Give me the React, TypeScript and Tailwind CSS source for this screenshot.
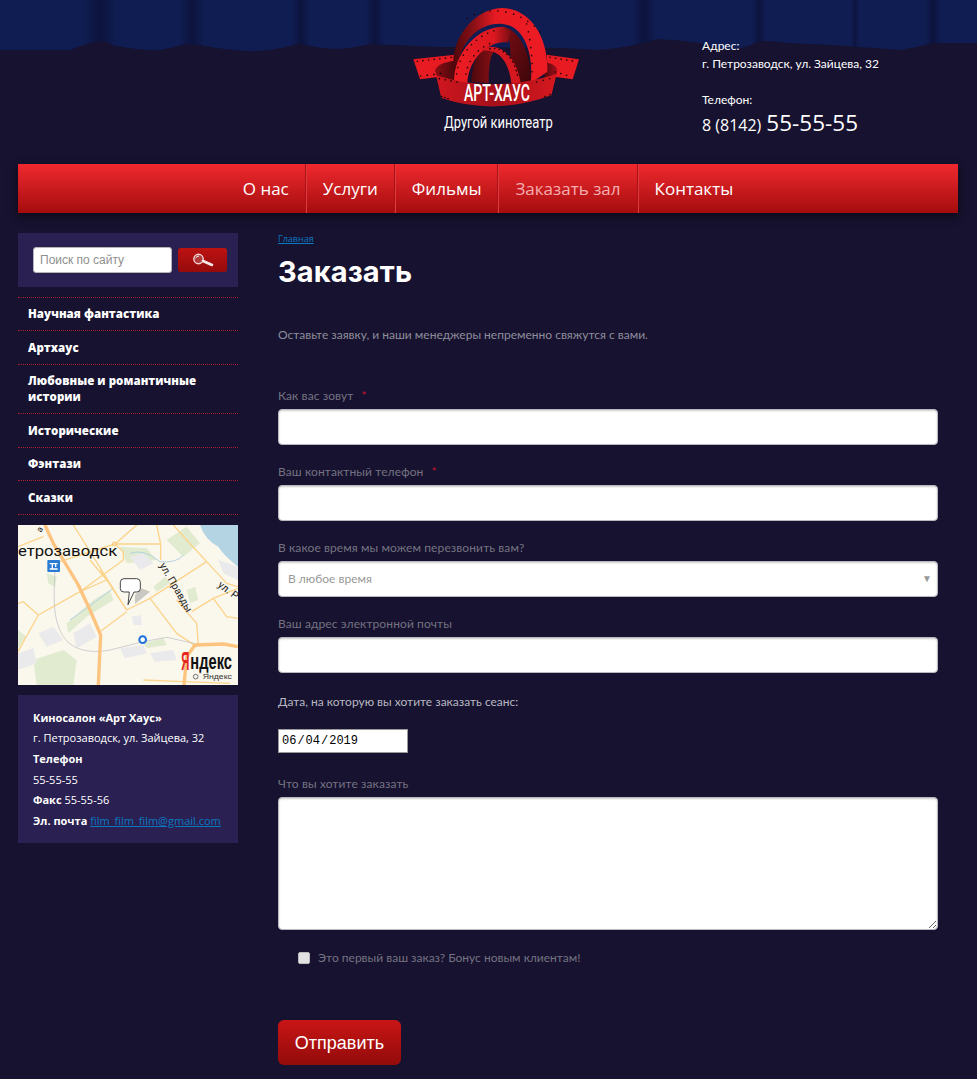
import React from "react";

const open = "font-['Open_Sans','Noto_Sans',sans-serif]";
const labelFont = "font-['Lato','Noto_Sans',sans-serif]";

const curtainEdge =
  "M0 50 L70 50 Q88 43 100 41 Q106 41 112 45 Q140 51 160 50 Q175 47 185 44 L200 45 Q235 52 260 51 Q282 49 300 43 L305 45 Q325 49 340 49 Q358 47 370 44 L440 47 L560 48 L600 50 Q632 47 657 39 Q680 40 700 43 Q718 49 733 50 Q750 46 760 41 Q775 41 787 43 L833 45 L860 47 L900 50 Q918 47 933 43 L977 43 L977 0 L0 0 Z";

const gaps = [
  [84, 32],
  [180, 24],
  [292, 18],
  [366, 18],
  [632, 24],
  [752, 14],
  [851, 8],
  [925, 16],
];

const Curtains = () => (
  <svg className="absolute left-0 top-0" width="977" height="60" viewBox="0 0 977 60">
    <defs>
      <linearGradient id="gap" x1="0" x2="1" y1="0" y2="0">
        <stop offset="0" stopColor="#0a0f35" stopOpacity="0" />
        <stop offset="0.5" stopColor="#0b0f35" stopOpacity="0.75" />
        <stop offset="1" stopColor="#0a0f35" stopOpacity="0" />
      </linearGradient>
      <clipPath id="edge">
        <path d={curtainEdge} />
      </clipPath>
    </defs>
    <path d={curtainEdge} fill="#101d52" />
    <g clipPath="url(#edge)">
      {gaps.map(([x, w]) => (
        <rect key={x} x={x} y="0" width={w} height="60" fill="url(#gap)" />
      ))}
    </g>
  </svg>
);

const Logo = () => (
  <svg width="240" height="150" viewBox="0 0 720 450" className="absolute left-[380px] top-0">
    <defs>
      <linearGradient id="arch" x1="0" x2="1" y1="0" y2="0">
        <stop offset="0" stopColor="#4d080c" />
        <stop offset="0.22" stopColor="#8b1016" />
        <stop offset="0.45" stopColor="#e81a22" />
        <stop offset="1" stopColor="#ed1c24" />
      </linearGradient>
      <linearGradient id="mid" x1="0" x2="1" y1="0" y2="0">
        <stop offset="0" stopColor="#ed1c24" />
        <stop offset="0.7" stopColor="#dd1820" />
        <stop offset="1" stopColor="#7a0d13" />
      </linearGradient>
      <linearGradient id="leg" x1="0" x2="1" y1="0" y2="1">
        <stop offset="0" stopColor="#7a0d13" />
        <stop offset="1" stopColor="#3d060a" />
      </linearGradient>
      <linearGradient id="inLeft" x1="0" x2="1" y1="0" y2="0">
        <stop offset="0" stopColor="#4d080c" />
        <stop offset="1" stopColor="#8b1016" />
      </linearGradient>
      <linearGradient id="band" x1="0" x2="1" y1="0" y2="0">
        <stop offset="0" stopColor="#d0161e" />
        <stop offset="0.5" stopColor="#a5101a" />
        <stop offset="1" stopColor="#d8181f" />
      </linearGradient>
      <linearGradient id="back" x1="0" x2="1" y1="0" y2="0">
        <stop offset="0" stopColor="#8a0e14" />
        <stop offset="1" stopColor="#3d060a" />
      </linearGradient>
      <linearGradient id="backR" x1="0" x2="1" y1="0" y2="0">
        <stop offset="0" stopColor="#4d080c" />
        <stop offset="1" stopColor="#a5101a" />
      </linearGradient>
    </defs>
    <path d="M100 178 L225 164 L225 225 L120 238 Z" fill="#e81a22" />
    <path d="M500 164 L597 178 L578 238 L505 228 Z" fill="#e81a22" />
    <path d="M165 212 Q172 188 225 182 L240 250 L172 232 Z" fill="url(#back)" />
    <path d="M500 188 Q530 192 532 212 L528 228 L490 250 Z" fill="url(#backR)" />
    {/* dark right leg of the middle ribbon */}
    <path d="M370 80 C420 92 455 160 452 250 L395 250 L390 130 Z" fill="url(#leg)" />
    {/* outer ribbon */}
    <path
      d="M220 190 C218 110 285 26 365 24 C445 24 506 105 502 215 L452 250 C462 160 432 78 368 72 C300 66 245 120 232 200 Z"
      fill="url(#arch)"
    />
    {/* left dark leg of the inner ribbon */}
    <path d="M274 245 C276 190 295 155 325 142 L345 150 C330 165 326 200 326 250 Z" fill="url(#inLeft)" />
    {/* middle ribbon */}
    <path d="M222 245 C222 160 290 80 370 80 L392 92 L384 128 C340 118 266 165 262 250 Z" fill="url(#mid)" />
    {/* inner ribbon */}
    <path d="M305 148 C350 122 408 160 422 250 L394 250 C388 195 365 152 318 152 Z" fill="#d5181f" />
    {/* front band */}
    <path d="M168 226 Q340 282 530 222 L514 286 Q345 348 184 294 Z" fill="url(#band)" />
    <g fill="none" stroke="#1a0508" strokeLinecap="round" strokeWidth="5">
      <path d="M112 184 L215 172" strokeDasharray="0 17" />
      <path d="M122 228 L200 218" strokeDasharray="0 20" />
      <path d="M510 172 L585 184" strokeDasharray="0 17" />
      <path d="M525 216 L575 230" strokeDasharray="0 18" />
      <path d="M262 55 C320 18 420 22 488 105" strokeDasharray="0 24" />
      <path d="M440 72 C452 120 458 180 456 225" strokeDasharray="0 24" />
      <path d="M230 222 C236 165 290 100 360 88" strokeDasharray="0 20" />
      <path d="M258 222 C262 190 290 140 340 128" strokeDasharray="0 20" />
      <path d="M330 146 C370 140 405 175 414 235" strokeDasharray="0 14" />
      <path d="M178 236 L240 248" strokeDasharray="0 18" />
      <path d="M185 290 L205 296" strokeDasharray="0 10" />
      <path d="M495 290 L515 282" strokeDasharray="0 16" />
      <path d="M470 246 L525 232" strokeDasharray="0 20" />
    </g>
    <text x="252" y="303" textLength="198" lengthAdjust="spacingAndGlyphs" fill="#fff" fontSize="70" fontWeight="500" fontFamily="Roboto, sans-serif">
      АРТ-ХАУС
    </text>
    <text x="192" y="385" textLength="326" lengthAdjust="spacingAndGlyphs" fill="#fff" fontSize="48" fontFamily="Roboto, sans-serif">
      Другой кинотеатр
    </text>
  </svg>
);

const Road = ({ d, w = 4, c = "#fcd48a" }: { d: string; w?: number; c?: string }) => (
  <path d={d} fill="none" stroke={c} strokeWidth={w} strokeLinejoin="round" />
);

const MapPic = () => (
  <svg width="220" height="160" viewBox="24 15 660 480" className="block">
    <rect x="24" y="15" width="660" height="480" fill="#faf7ed" />
    <path d="M570 15 H684 V140 Q640 105 625 80 Q585 60 570 15 Z" fill="#b4d3e3" />
    <g fill="#e1ebd0">
      <path d="M470 60 L530 20 L570 70 L520 110 Z" />
      <path d="M330 80 L410 85 L440 120 L350 130 Z" />
      <path d="M170 310 L250 240 L300 210 L310 240 L230 290 L175 340 Z" />
      <path d="M430 200 L465 170 L480 190 L440 215 Z" />
      <path d="M70 420 L160 390 L200 420 L190 495 L80 495 Z" />
      <path d="M24 330 L50 350 L24 385 Z" />
      <path d="M530 210 L555 200 L565 240 L540 250 Z" />
      <path d="M400 370 L460 355 L470 375 L410 385 Z" />
      <path d="M110 160 L140 170 L135 200 L115 190 Z" />
    </g>
    <g fill="#eaeaec">
      <path d="M85 340 L130 320 L160 360 L110 380 Z" />
      <path d="M190 340 L240 310 L260 350 L200 385 Z" />
      <path d="M360 110 L400 100 L430 130 L390 150 Z" />
      <path d="M330 385 L400 375 L410 400 L345 415 Z" />
      <path d="M365 290 L392 285 L395 315 L372 315 Z" />
      <path d="M24 400 L70 385 L80 430 L24 450 Z" />
      <path d="M625 120 L684 140 L684 180 L640 160 Z" />
      <path d="M420 400 L490 390 L500 420 L435 425 Z" />
    </g>
    <Road d="M360 100 Q400 85 450 125 Q500 130 520 105" w={3} c="#b4d3e3" />
    <Road d="M180 300 Q250 250 310 205" w={3} c="#b4d3e3" />
    <g>
      <Road d="M24 395 L85 285 L210 215 L340 120 L340 95 L315 72 L450 72" />
      <Road d="M85 285 L40 245 L24 250" />
      <Road d="M190 15 L350 270 L420 235 L590 125 L650 190 L684 200" />
      <Road d="M270 335 L350 275" />
      <Road d="M420 235 L500 340 L560 380" />
      <Road d="M440 15 L452 72 L452 120" />
      <Road d="M380 15 L315 72 L150 125" />
      <Road d="M590 125 L530 60 L490 15" />
      <Road d="M545 275 L610 235 L650 290 L684 295" />
      <Road d="M500 240 L560 310 L565 375" />
      <Road d="M610 235 L684 205" />
      <Road d="M400 480 L520 485 L660 490" />
      <Road d="M24 80 L100 50" />
      <Road d="M270 150 L350 270" />
      <Road d="M240 120 L290 180 L210 215" />
    </g>
    <Road d="M135 150 C130 250 130 300 160 350 C190 395 250 400 300 390 L400 365 L470 352 L560 372" w={2} c="#b9b9c2" />
    <Road d="M105 15 L130 70 L205 195 L240 270 L272 345 L265 495" w={10} c="#fdc47f" />
    <Road d="M684 380 L640 372 L555 375 L530 410 L522 495" w={10} c="#fdc47f" />
    <circle cx="313" cy="72" r="6" fill="#fce0a6" stroke="#f2b968" strokeWidth="2" />
    <rect x="112" y="120" width="38" height="36" rx="3" fill="#2a7bd3" />
    <path d="M119 131 H143 M119 147 H143 M127 131 V145 M137 131 V141" stroke="#fff" strokeWidth="4" />
    <text x="24" y="108" fontSize="43" fill="#111" fontFamily="Roboto, sans-serif" textLength="298" lengthAdjust="spacingAndGlyphs">етрозаводск</text>
    <text x="0" y="0" fontSize="31" fill="#222" fontFamily="Roboto, sans-serif" transform="translate(448 136) rotate(60)">ул. Правды</text>
    <text x="0" y="0" fontSize="31" fill="#222" fontFamily="Roboto, sans-serif" transform="translate(622 198) rotate(38)">ул. Р</text>
    <text x="0" y="0" fontSize="26" fill="#222" fontFamily="Roboto, sans-serif" transform="translate(94 38) rotate(-65)">а</text>
    <path d="M375 252 L420 215 L395 205 L375 225 Z" fill="#9a9a9a" opacity="0.5" />
    <path
      d="M342 176 H380 Q391 176 391 187 V206 Q391 216 380 216 H372 L354 254 L358 216 H342 Q331 216 331 206 V187 Q331 176 342 176 Z"
      fill="#fff"
      stroke="#222"
      strokeWidth="2.5"
    />
    <circle cx="398" cy="359" r="10" fill="#fff" stroke="#1c6fd8" strokeWidth="6" />
    <text x="0" y="0" fontSize="34" fontWeight="700" fill="#e52620" fontFamily="Liberation Sans, sans-serif" transform="translate(514 449) scale(1 2.2)">Я</text>
    <text x="0" y="0" fontSize="44" fontWeight="700" fill="#111" fontFamily="Liberation Sans, sans-serif" transform="translate(541 448) scale(1 1.55)">ндекс</text>
    <rect x="543" y="458" width="126" height="24" fill="#faf7ed" opacity="0.8" />
    <circle cx="557" cy="470" r="7" fill="none" stroke="#333" strokeWidth="2" />
    <text x="578" y="478" fontSize="22" fill="#333" fontFamily="Liberation Sans, sans-serif" textLength="88" lengthAdjust="spacingAndGlyphs">Яндекс</text>
  </svg>
);

const SearchIcon = () => (
  <svg width="22" height="14" viewBox="0 0 22 14" fill="none">
    <circle cx="6.5" cy="6" r="4.7" stroke="#f3d6d6" strokeWidth="1.4" fill="#b23a3a" />
    <path d="M3.5 5 Q5 3 7 3" stroke="#fff" strokeWidth="1" />
    <path d="M11 8 L20 12" stroke="#f5e9e9" strokeWidth="2.6" strokeLinecap="round" />
  </svg>
);

const fieldClass =
  "block w-full h-9 bg-white border border-[#b9b9c0] rounded-[4px] shadow-[inset_0_1px_2px_rgba(0,0,0,0.2)] outline-none";

const Label = ({ text, required }: { text: string; required?: boolean }) => (
  <label className={`block text-xs leading-4 tracking-[0.1px] text-[#757382] ${labelFont}`}>
    {text}
    {required && <span className="ml-2 text-[#c8102e]">*</span>}
  </label>
);

const menu = ["Научная фантастика", "Артхаус", "Любовные и романтичные истории", "Исторические", "Фэнтази", "Сказки"];
const nav = ["О нас", "Услуги", "Фильмы", "Заказать зал", "Контакты"];

export default function App() {
  return (
    <div className="relative h-[1079px] overflow-hidden bg-[#16122f] pl-[18px] pr-[19px]">
      <header className="relative -ml-[18px] -mr-[19px] h-[164px]">
        <Curtains />
        <Logo />
        <div className={`absolute left-[702px] top-[37px] text-xs text-white ${labelFont}`}>
          <p className="leading-[17px]">Адрес:</p>
          <p className="mt-[1px] leading-[17px]">г. Петрозаводск, ул. Зайцева, 32</p>
          <p className="mt-[19px] leading-[17px]">Телефон:</p>
          <p className={`flex items-baseline text-base leading-[30px] ${open}`}>
            8 (8142)<span className="ml-[5px] text-[22.5px]">55-55-55</span>
          </p>
        </div>
      </header>

      <nav className={`flex h-[49px] justify-center bg-gradient-to-b from-[#f0292e] to-[#a50c0d] shadow-[0_3px_8px_rgba(0,0,0,0.5)] ${open}`}>
        {nav.map((item, idx) => (
          <a
            key={item}
            className={`flex items-center px-4 text-[17px] ${idx === 3 ? "text-[#f5aeb0]" : "text-white"} ${idx > 0 ? "border-l border-l-[#e2393c]" : ""} ${idx < 4 ? "border-r border-r-[#a81216]" : ""}`}
          >
            {item}
          </a>
        ))}
      </nav>

      <div className="mt-5 flex gap-10">
        <aside className="w-[220px] shrink-0">
          <div className="flex h-[54px] items-center gap-[6px] bg-[#2a2152] pl-[15px]">
            <input
              placeholder="Поиск по сайту"
              className="h-[26px] w-[139px] rounded-[3px] border border-[#b5b5b5] bg-white px-[6px] text-xs text-[#555] outline-none placeholder:text-[#8f8f8f] font-['Liberation_Sans',sans-serif]"
            />
            <button className="flex h-6 w-[49px] items-center justify-center rounded-[3px] bg-gradient-to-b from-[#bd1212] to-[#960b0b]">
              <SearchIcon />
            </button>
          </div>
          <ul className="mt-[9.75px] border-t border-dotted border-[#a5202a]">
            {menu.map((item) => (
              <li key={item} className={`border-b border-dotted border-[#a5202a] px-[10px] py-[8.25px] text-[11.5px] font-extrabold leading-4 tracking-[0.05px] text-white ${open}`}>
                {item}
              </li>
            ))}
          </ul>
          <div className="mt-[10px]">
            <MapPic />
          </div>
          <div className={`mt-[10px] h-[148px] bg-[#2a2152] px-[15px] py-[13px] text-[11px] leading-[20.6px] text-white ${open}`}>
            <p className="font-bold">Киносалон «Арт Хаус»</p>
            <p>г. Петрозаводск, ул. Зайцева, 32</p>
            <p className="font-bold">Телефон</p>
            <p>55-55-55</p>
            <p>
              <b>Факс</b> 55-55-56
            </p>
            <p className="whitespace-nowrap">
              <b>Эл. почта</b> <a className="text-[#0b78c2] underline">film_film_film@gmail.com</a>
            </p>
          </div>
        </aside>

        <main className="w-[660px]">
          <a className={`block text-[9px] leading-3 text-[#0b78c2] underline ${open}`}>Главная</a>
          <h1 className="mt-[7px] font-['Inter',sans-serif] text-[29px] font-bold leading-[40px] tracking-[0.1px] text-white">Заказать</h1>
          <p className={`mt-[35px] text-xs leading-4 text-[#8f8e9c] ${labelFont}`}>Оставьте заявку, и наши менеджеры непременно свяжутся с вами.</p>

          <div className="mt-[45px] flex flex-col gap-[9px]">
            <div className="flex flex-col gap-[5px]">
              <Label text="Как вас зовут" required />
              <input className={fieldClass} />
            </div>
            <div className="mt-[10px] flex flex-col gap-[5px]">
              <Label text="Ваш контактный телефон" required />
              <input className={fieldClass} />
            </div>
            <div className="mt-[10px] flex flex-col gap-[5px]">
              <Label text="В какое время мы можем перезвонить вам?" />
              <div className="relative">
                <select className={`${fieldClass} appearance-none px-[9px] text-xs text-[#999] ${labelFont}`}>
                  <option>В любое время</option>
                </select>
                <span className="absolute right-[6px] top-[11px] text-[10px] leading-3 text-[#999]">▼</span>
              </div>
            </div>
            <div className="mt-[10px] flex flex-col gap-[5px]">
              <Label text="Ваш адрес электронной почты" />
              <input className={fieldClass} />
            </div>
          </div>

          <label className={`mt-[21px] block text-xs leading-4 text-[#b9b8c2] ${labelFont}`}>Дата, на которую вы хотите заказать сеанс:</label>
          <input
            type="date"
            defaultValue="2019-06-04"
            className="mt-[19px] block h-6 w-[130px] border border-[#999] bg-white pl-[2px] font-['Liberation_Mono',monospace] text-xs text-black outline-none [&::-webkit-calendar-picker-indicator]:hidden"
          />

          <div className="mt-[23px]">
            <Label text="Что вы хотите заказать" />
            <textarea className={`${fieldClass} mt-[5px] h-[133px]`} />
          </div>

          <label className={`ml-5 mt-[20px] flex h-4 items-center gap-2 text-xs text-[#757382] ${labelFont}`}>
            <input type="checkbox" className="h-3 w-3 appearance-none rounded-[2px] border border-[#bbb] bg-[#e2e2e2]" />
            Это первый ваш заказ? Бонус новым клиентам!
          </label>

          <button className="mt-[54px] h-[45px] w-[123px] rounded-[6px] bg-gradient-to-b from-[#c91515] to-[#930b0b] font-['Liberation_Sans',sans-serif] text-lg text-white">
            Отправить
          </button>
        </main>
      </div>
    </div>
  );
}
